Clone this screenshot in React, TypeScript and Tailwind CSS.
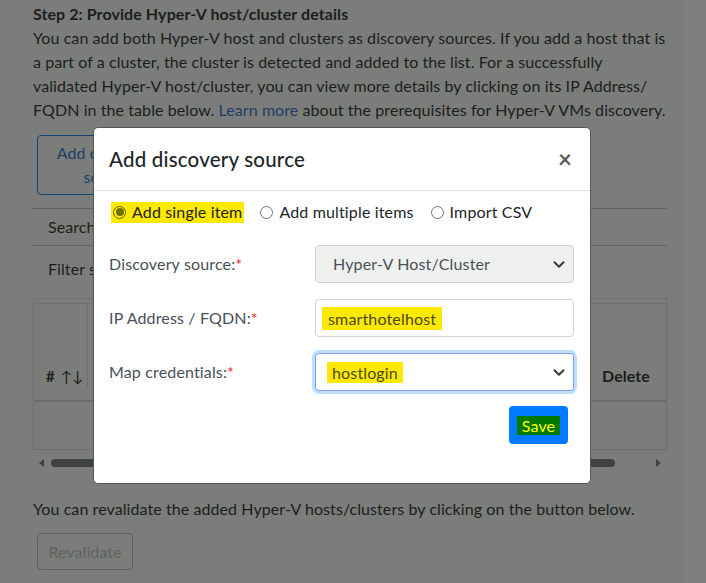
import React from "react";

const Chevron = () => (
  <svg width="12" height="9" viewBox="0 0 16 12" fill="none">
    <path d="M2 3l6 6 6-6" stroke="#343a40" strokeWidth="2.6" strokeLinecap="round" strokeLinejoin="round" />
  </svg>
);

const Radio = ({ checked }: { checked?: boolean }) =>
  checked ? (
    <span className="inline-flex h-[13px] w-[13px] items-center justify-center rounded-full border border-[#5f5f00]">
      <span className="h-[8px] w-[8px] rounded-full bg-[#6f6f00]" />
    </span>
  ) : (
    <span className="inline-block h-[13px] w-[13px] rounded-full border border-[#767676] bg-white" />
  );

export default function App() {
  return (
    <div className="relative h-[583px] w-[706px] overflow-hidden bg-[#7a7d7a] text-[#1c1e1c]" style={{ fontFamily: "Lato, 'Open Sans', sans-serif" }}>
      <div className="absolute right-0 top-0 h-full w-[23px] bg-[#7d7f7d]" />
      {/* background page */}
      <div className="w-[634px] pl-[33px] pt-[2px] text-[16px] leading-[24px] tracking-[0.08px]" style={{ boxSizing: "content-box" }}>
        <div className="font-bold">Step 2: Provide Hyper-V host/cluster details</div>
        <p>
          You can add both Hyper-V host and clusters as discovery sources. If you add a host that is a part of a cluster, the cluster is detected and added to the list. For a successfully validated Hyper-V host/cluster, you can view more details by clicking on its IP Address/ FQDN in the table below. <span className="text-[#1d3d66]">Learn more</span> about the prerequisites for Hyper-V VMs discovery.
        </p>
        <div className="mt-[13px] ml-[4px] flex h-[60px] w-[140px] items-center justify-center rounded-[4px] border border-[#16407a] px-[12px] text-center text-[#1d3d66] leading-[24px]">
          Add discovery source
        </div>
        <div className="mt-[13px] flex h-[38px] items-center border-y border-[#5f625f] pl-[15px]">Search</div>
        <div className="flex h-[46px] items-center pl-[15px]">Filter sources</div>
        <div className="mt-[6px] border border-[#6d706d] pt-[4px]">
          <div className="flex h-[97px] items-end border-t border-[#6d706d] pb-[12px]">
            <div className="flex h-full w-[54px] items-end border-r border-[#6d706d] pl-[12px] text-[15px] font-bold">
              # <span className="ml-[6px] font-normal">↑↓</span>
            </div>
            <div className="flex-1" />
            <div className="w-[64px] font-bold">Delete</div>
          </div>
          <div className="h-[49px] border-t-2 border-[#6a6d6a]" />
        </div>
        <div className="mt-[6px] flex h-[14px] items-center">
          <span className="ml-[6px] h-0 w-0 border-y-[4px] border-r-[5px] border-y-transparent border-r-[#3f423f]" />
          <span className="ml-[7px] h-[8px] w-[564px] rounded-full bg-[#3f433f]" />
          <span className="ml-auto mr-[6px] h-0 w-0 border-y-[4px] border-l-[5px] border-y-transparent border-l-[#3f423f]" />
        </div>
        <p className="mt-[27px]">You can revalidate the added Hyper-V hosts/clusters by clicking on the button below.</p>
        <div className="mt-[12px] ml-[4px] flex h-[37px] w-[96px] items-center justify-center rounded-[4px] border border-[#5c5f5c] text-[#5e615e]">
          Revalidate
        </div>
      </div>

      {/* modal */}
      <div className="absolute left-[93px] top-[127px] h-[357px] w-[498px] rounded-[5px] border border-[#555855] bg-white text-[#495057] tracking-[0.15px]">
        <div className="flex h-[63px] items-center justify-between border-b border-[#dee2e6] pl-[15px] pr-[18px]">
          <span className="text-[20.5px] font-medium text-[#212529] tracking-[0.2px]">Add discovery source</span>
          <span className="text-[24px] font-bold leading-none text-[#5a5a5a]">×</span>
        </div>
        <div className="px-[15px] pt-[10px] text-[16px]">
          <div className="flex h-[22px] items-center">
            <span className="ml-[2px] flex h-[21px] items-center gap-[6px] bg-[#ffe900] pl-[2px] pr-[2px] text-[#222]">
              <Radio checked /> Add single item
            </span>
            <span className="ml-[16px] flex items-center gap-[6px] text-[#212529]">
              <Radio /> Add multiple items
            </span>
            <span className="ml-[17px] flex items-center gap-[6px] text-[#212529]">
              <Radio /> Import CSV
            </span>
          </div>
          <div className="mt-[22px] flex flex-col gap-[16px]">
            <div className="flex items-center">
              <span className="w-[206px]">Discovery source:<span className="text-[#e0262d]">*</span></span>
              <div className="flex h-[38px] w-[259px] items-center justify-between rounded-[4px] border border-[#ced4da] bg-[#eef0ee] pl-[17px] pr-[8px]">
                <span>Hyper-V Host/Cluster</span>
                <Chevron />
              </div>
            </div>
            <div className="flex items-center">
              <span className="w-[206px]">IP Address / FQDN:<span className="text-[#e0262d]">*</span></span>
              <div className="flex h-[38px] w-[259px] items-center rounded-[4px] border border-[#ced4da] bg-white pl-[6px]">
                <span className="bg-[#ffe900] px-[6px] leading-[23px] text-[#4a4a1a]">smarthotelhost</span>
              </div>
            </div>
            <div className="flex items-center">
              <span className="w-[206px]">Map credentials:<span className="text-[#e0262d]">*</span></span>
              <div className="flex h-[38px] w-[259px] items-center justify-between rounded-[4px] border border-[#7f9ff0] bg-white pl-[11px] pr-[8px] shadow-[0_0_0_3px_rgba(0,123,255,0.25)]">
                <span className="bg-[#ffe900] px-[5px] leading-[21px] text-[#4a4a1a]">hostlogin</span>
                <Chevron />
              </div>
            </div>
          </div>
          <div className="mt-[15px] flex justify-end pr-[7px]">
            <div className="flex h-[38px] w-[59px] items-center justify-center rounded-[4px] bg-[#007bff]">
              <span className="bg-[#007a00] px-[5px] leading-[19px] text-[#ffff00]">Save</span>
            </div>
          </div>
        </div>
      </div>
    </div>
  );
}
